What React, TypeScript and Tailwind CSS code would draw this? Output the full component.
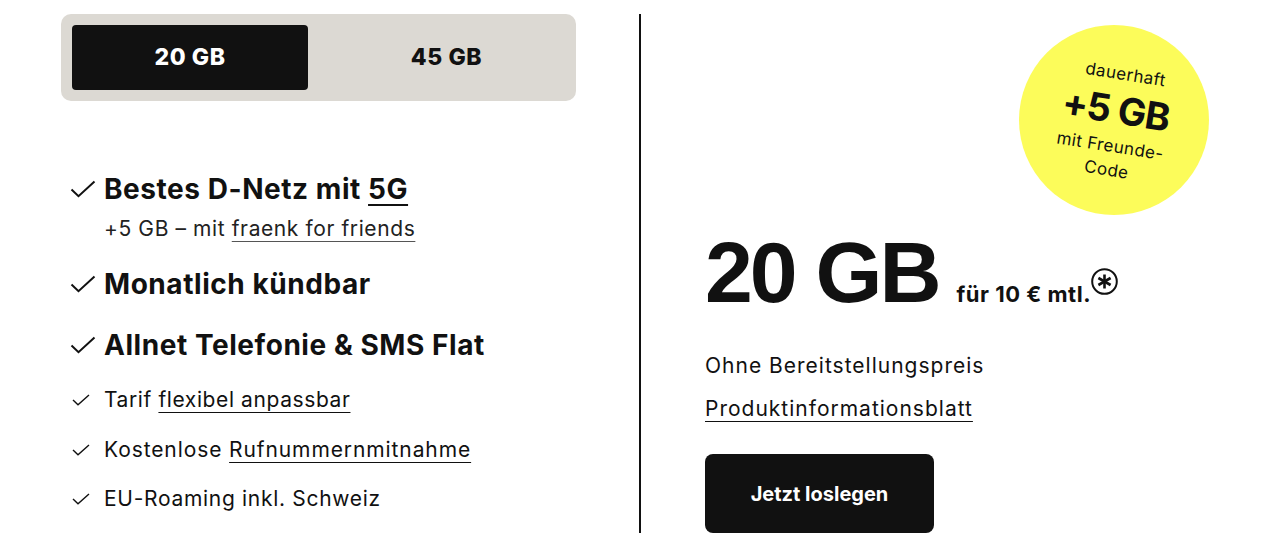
import React from 'react';

const Check = ({ big }: { big?: boolean }) =>
  big ? (
    <svg width="26" height="18" viewBox="0 0 26 18" className="shrink-0" fill="none">
      <path d="M1.5 9.5 L8.5 16.2 L24.5 1.5" stroke="#111" strokeWidth="2" />
    </svg>
  ) : (
    <svg width="18" height="12" viewBox="0 0 18 12" className="shrink-0" fill="none">
      <path d="M1 6 L6 10.8 L17 1" stroke="#111" strokeWidth="1.4" />
    </svg>
  );

const Star = () => (
  <svg width="27" height="27" viewBox="0 0 27 27" fill="none" className="shrink-0">
    <circle cx="13.5" cy="13.5" r="12.3" stroke="#111" strokeWidth="2" />
    <g stroke="#111" strokeWidth="2.6" strokeLinecap="butt">
      <line x1="13.5" y1="6.5" x2="13.5" y2="20.5" />
      <line x1="7.4" y1="10" x2="19.6" y2="17" />
      <line x1="7.4" y1="17" x2="19.6" y2="10" />
    </g>
  </svg>
);

const font = { fontFamily: 'Inter, "Liberation Sans", sans-serif' };

export default function App() {
  return (
    <div className="relative w-[1280px] h-[553px] bg-white text-[#111] overflow-hidden" style={font}>
      <div className="flex pl-[61px] pt-[14px]">
        {/* left column */}
        <div className="w-[515px] flex flex-col">
          <div className="h-[87px] rounded-[10px] bg-[#dcd9d3] p-[11px] flex">
            <button className="w-[236px] h-[65px] rounded-[4px] bg-[#111] text-white text-[23px] font-extrabold tracking-[0.6px]">20 GB</button>
            <button className="flex-1 h-[65px] pl-[20px] text-[#111] text-[23px] font-extrabold tracking-[0.6px]">45 GB</button>
          </div>

          <ul className="mt-[71px] flex flex-col">
            <li className="flex items-start gap-[8px] pl-[9px]">
              <span className="mt-[8px]"><Check big /></span>
              <div>
                <div className="text-[28px] leading-[34px] font-bold tracking-[0.55px]">
                  Bestes D-Netz mit <span className="underline decoration-[1.5px] underline-offset-[5px]">5G</span>
                </div>
                <div className="mt-[8px] text-[21px] leading-[30px] text-[#222] tracking-[0.6px]">
                  +5 GB – mit <span className="underline decoration-[1px] underline-offset-[5px] decoration-[#555]">fraenk for friends</span>
                </div>
              </div>
            </li>
            <li className="mt-[23px] flex items-center gap-[8px] pl-[9px]">
              <Check big />
              <span className="text-[28px] leading-[34px] font-bold tracking-[0.55px]">Monatlich kündbar</span>
            </li>
            <li className="mt-[27px] flex items-center gap-[8px] pl-[9px]">
              <Check big />
              <span className="text-[28px] leading-[34px] font-bold tracking-[0.55px]">Allnet Telefonie &amp; SMS Flat</span>
            </li>
            <li className="mt-[24px] flex items-center gap-[14px] pl-[11px]">
              <Check />
              <span className="text-[21px] leading-[28px] tracking-[0.6px]">
                Tarif <span className="underline decoration-[1px] underline-offset-[5px]">flexibel anpassbar</span>
              </span>
            </li>
            <li className="mt-[22px] flex items-center gap-[14px] pl-[11px]">
              <Check />
              <span className="text-[21px] leading-[28px] tracking-[0.9px]">
                Kostenlose <span className="underline decoration-[1px] underline-offset-[5px]">Rufnummernmitnahme</span>
              </span>
            </li>
            <li className="mt-[21px] flex items-center gap-[14px] pl-[11px]">
              <Check />
              <span className="text-[21px] leading-[28px] tracking-[0.7px]">EU-Roaming inkl. Schweiz</span>
            </li>
          </ul>
        </div>

        {/* divider */}
        <div className="ml-[63px] w-[2px] h-[519px] bg-[#111]" />

        {/* right column */}
        <div className="ml-[64px] pt-[215px] flex flex-col">
          <div className="flex items-baseline">
            <span
              className="text-[86px] leading-none font-bold tracking-[-3px]"
              style={{ fontFamily: '"Liberation Sans", Arial, sans-serif' }}
            >
              20 GB
            </span>
            <span className="ml-[18px] text-[22px] font-bold tracking-[0.5px]">für 10 € mtl.</span>
            <span className="self-start mt-[39px]">
              <Star />
            </span>
          </div>
          <div className="mt-[37px] text-[21px] leading-[28px] tracking-[1px]">Ohne Bereitstellungspreis</div>
          <div className="mt-[15px] text-[21px] leading-[28px] tracking-[1px]">
            <span className="underline decoration-[1px] underline-offset-[5px]">Produktinformationsblatt</span>
          </div>
          <button className="mt-[31px] w-[229px] h-[79px] rounded-[8px] bg-[#111] text-white text-[20px] font-bold">
            Jetzt loslegen
          </button>
        </div>
      </div>

      {/* badge */}
      <div className="absolute left-[1019px] top-[25px] w-[190px] h-[190px] rounded-full bg-[#fcfc5a] flex items-center justify-center">
        <div className="translate-y-[2px] rotate-[9deg] flex flex-col items-center text-[#111]">
          <span className="text-[17px] leading-[22px] ml-[8px] tracking-[0.4px]">dauerhaft</span>
          <span className="text-[38px] leading-[50px] font-bold tracking-[-1px]">+5 GB</span>
          <span className="text-[17px] leading-[24px] text-center w-[130px] tracking-[0.4px]">mit Freunde-<br />Code</span>
        </div>
      </div>
    </div>
  );
}
